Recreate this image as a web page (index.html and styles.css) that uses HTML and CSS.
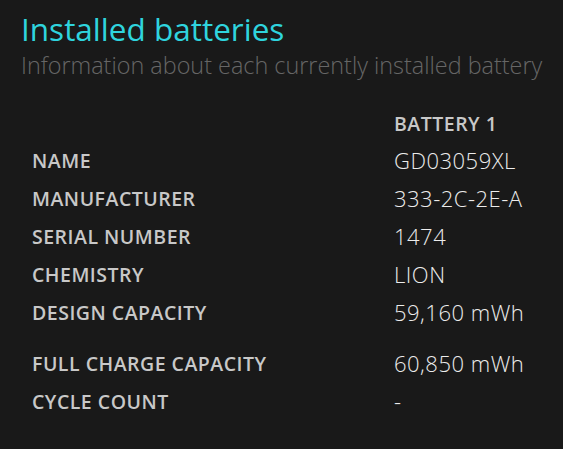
FILE: index.html
```html
<!DOCTYPE html>
<html lang="en">
<head>
<meta charset="utf-8">
<title>Installed batteries</title>
<link rel="stylesheet" href="styles.css">
</head>
<body>
<section class="report">
  <h1 class="title">Installed batteries</h1>
  <p class="subtitle">Information about each currently installed battery</p>
  <div class="table">
    <div class="row head"><span class="label"></span><span class="col-head">BATTERY 1</span></div>
    <div class="row"><span class="label">NAME</span><span class="value">GD03059XL</span></div>
    <div class="row"><span class="label">MANUFACTURER</span><span class="value">333-2C-2E-A</span></div>
    <div class="row"><span class="label">SERIAL NUMBER</span><span class="value">1474</span></div>
    <div class="row"><span class="label">CHEMISTRY</span><span class="value">LION</span></div>
    <div class="row"><span class="label">DESIGN CAPACITY</span><span class="value">59,160 mWh</span></div>
    <div class="row spaced"><span class="label">FULL CHARGE CAPACITY</span><span class="value">60,850 mWh</span></div>
    <div class="row"><span class="label">CYCLE COUNT</span><span class="value">-</span></div>
  </div>
</section>
</body>
</html>
```

FILE: styles.css
```css
html, body {
  margin: 0;
  padding: 0;
  background: #191919;
}
body {
  font-family: "Open Sans", "Noto Sans", sans-serif;
  width: 563px;
  height: 449px;
  overflow: hidden;
}
.report {
  padding: 9px 0 0 21px;
}
.title {
  margin: 0;
  font-size: 31.5px;
  font-weight: 400;
  line-height: 40px;
  color: #2fd4de;
}
.subtitle {
  margin: 0;
  font-size: 23.4px;
  font-weight: 300;
  line-height: 32px;
  color: #666666;
}
.table {
  margin-top: 25px;
  padding-left: 11px;
}
.row {
  display: grid;
  grid-template-columns: 362px auto;
  height: 38px;
  align-items: center;
}
.row.head {
  height: 35px;
}
.row.spaced {
  margin-top: 13px;
}
.label,
.col-head {
  font-size: 19.5px;
  font-weight: 600;
  letter-spacing: 0.5px;
  color: #c8c8c8;
}
.value {
  font-size: 22px;
  font-weight: 300;
  letter-spacing: 0.5px;
  color: #ececec;
}
```
